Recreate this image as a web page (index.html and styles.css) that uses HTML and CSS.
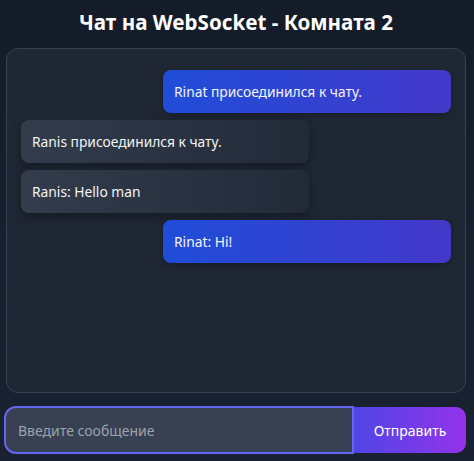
FILE: index.html
```html
<!DOCTYPE html>
<html lang="ru">
<head>
<meta charset="utf-8">
<title>Чат на WebSocket</title>
<link rel="stylesheet" href="styles.css">
</head>
<body>
<div class="app">
  <h2 class="title">Чат на WebSocket - Комната 2</h2>
  <div class="chat">
    <div class="msg mine">Rinat присоединился к чату.</div>
    <div class="msg other">Ranis присоединился к чату.</div>
    <div class="msg other">Ranis: Hello man</div>
    <div class="msg mine">Rinat: Hi!</div>
  </div>
  <form class="composer">
    <input class="field" type="text" placeholder="Введите сообщение">
    <button class="send" type="button">Отправить</button>
  </form>
</div>
</body>
</html>
```
FILE: styles.css
```css
html, body {
  margin: 0;
  height: 100%;
}
body {
  background: linear-gradient(180deg, #141b29 0%, #1a2130 100%);
  font-family: "Noto Sans", "Open Sans", sans-serif;
  color: #f3f4f6;
}
.app {
  padding: 0 8px 0 6px;
  display: flex;
  flex-direction: column;
}
.title {
  margin: 4px 0 0;
  height: 44px;
  font-size: 20.6px;
  font-weight: 700;
  text-align: center;
  line-height: 36px;
  color: #ffffff;
}
.chat {
  border: 1px solid #374151;
  border-radius: 12px;
  background: #1f2734;
  padding: 21px 14px;
  display: flex;
  flex-direction: column;
  gap: 7px;
  box-sizing: border-box;
  height: 345px;
}
.msg {
  width: 288px;
  height: 43px;
  box-sizing: border-box;
  padding: 0 11px;
  display: flex;
  align-items: center;
  font-size: 13.8px;
  border-radius: 8px;
  color: #f3f4f6;
}
.mine {
  align-self: flex-end;
  background: linear-gradient(90deg, #1f4dd8 0%, #4338ca 100%);
  box-shadow: 0 2px 6px rgba(0, 0, 0, 0.25);
}
.other {
  align-self: flex-start;
  background: linear-gradient(90deg, #333c4c 0%, #222a38 100%);
  box-shadow: 0 4px 8px rgba(0, 0, 0, 0.3);
}
.composer {
  margin: 13px 0 0 -2px;
  display: flex;
  align-items: center;
}
.field {
  flex: 1;
  height: 48px;
  box-sizing: border-box;
  border: 2px solid #6366f1;
  border-radius: 12px 0 0 12px;
  background: #374151;
  color: #e5e7eb;
  font-family: inherit;
  font-size: 14px;
  padding: 0 12px;
  outline: none;
}
.field::placeholder {
  color: #9ca3af;
}
.send {
  width: 112px;
  height: 46px;
  border: none;
  border-radius: 0 10px 10px 0;
  background: linear-gradient(90deg, #4f46e5 0%, #9333ea 100%);
  color: #ffffff;
  font-family: inherit;
  font-size: 14px;
  cursor: pointer;
}
```
